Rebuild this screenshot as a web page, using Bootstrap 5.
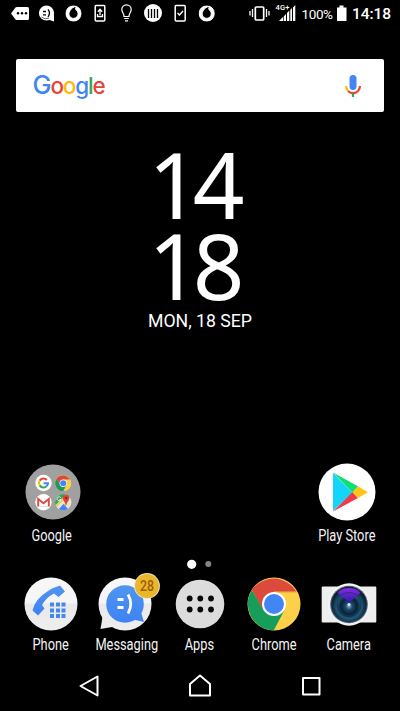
<!DOCTYPE html>
<html lang="en">
<head>
<meta charset="utf-8">
<meta name="viewport" content="width=device-width, initial-scale=1">
<title>Home screen</title>
<link href="https://cdn.jsdelivr.net/npm/bootstrap@5.3.0/dist/css/bootstrap.min.css" rel="stylesheet">
<style>
body{background:#000;color:#fff;font-family:Roboto,sans-serif}
svg{display:block}
.phone{width:400px;height:711px;overflow:hidden}
.status{height:28px}
.search{margin:31px 16px 0;height:53px;border-radius:2px;padding:0 21px 0 16.500px}
.wordmark{font:500 22.5px/53px Inter,sans-serif;letter-spacing:-1.200px}
.wordmark span:first-child{font-size:25.500px;line-height:1}
.clock{height:222px;padding-top:32px}
.digits{font:400 90.500px/81px "Noto Sans","Open Sans",sans-serif;letter-spacing:-7.200px;padding-right:14.500px}
.date{font-size:17.7px;line-height:20px;margin-top:5px}
.tile{width:74.5px}
.caption{font-size:16px;line-height:18px;margin-top:5px;white-space:nowrap;transform:scaleX(.8);color:#f4f4f4}
.shelf{margin-top:129px;height:85px;padding:0 16px}
.shelf .caption{margin-top:6px}
.pages{height:28px}
.dock{height:82px;padding:1px 13.5px 0}
.navkeys{height:47px}
</style>
</head>
<body>
<svg width="0" height="0" class="position-absolute">
<defs>
<linearGradient id="pale" x2="0" y2="1"><stop stop-color="#f7f7f7"/><stop offset=".48" stop-color="#f5f5f5"/><stop offset=".5" stop-color="#e9e9e9"/><stop offset="1" stop-color="#eee"/></linearGradient>
<linearGradient id="blue" x2="0" y2="1"><stop stop-color="#5096ee"/><stop offset="1" stop-color="#3e82f4"/></linearGradient>
<linearGradient id="violet" x2="0" y2="1"><stop stop-color="#862be8"/><stop offset="1" stop-color="#2b1aa0"/></linearGradient>
<radialGradient id="lens" cy=".55"><stop stop-color="#7fa9c4"/><stop offset=".2" stop-color="#1a4a6c"/><stop offset=".45" stop-color="#0a2138"/><stop offset=".7" stop-color="#1f5878"/><stop offset="1" stop-color="#0b1c30"/></radialGradient>
<symbol id="chrome" viewBox="0 0 54 54">
<circle cx="27" cy="27" r="26.5" fill="#fdd04a"/>
<path d="M4.800 13A26.500 26.500 0 0 1 49.500 14.800H27L16 33Z" fill="#dc4a3e"/>
<path d="M4.800 13L16.400 33 27 39 37.500 33 26.700 53.500A26.500 26.500 0 0 1 4.800 13Z" fill="#179d5b"/>
<path d="M27 15H49.600" stroke="#e2a52d" stroke-width="1"/>
<circle cx="27" cy="27" r="12" fill="#fff"/><circle cx="27" cy="27" r="10" fill="#4285f4"/>
</symbol>
<symbol id="drop" viewBox="0 0 16 16"><circle cx="8" cy="8" r="7.700" fill="#fff"/><path d="M11 .8C8.500 1 5.500 2.800 4.500 5.300A4.600 4.600 0 1 0 11 4.800C9.700 4.200 9.600 2.500 11 .8Z" fill="#000"/></symbol>
</defs>
</svg>
<main class="phone d-flex flex-column">
<header class="status">
<svg width="400" height="28" fill="none" stroke="#fff">
<path d="M11 13.500L15.500 7.500Q16 7 17 7H27.500Q29 7 29 8.500V18.500Q29 20 27.500 20H17Q16 20 15.500 19.500Z" fill="#fff" stroke="none"/>
<g fill="#000" stroke="none"><circle cx="18" cy="13.300" r="1.200"/><circle cx="22" cy="13.300" r="1.200"/><circle cx="26" cy="13.300" r="1.200"/></g>
<circle cx="46.500" cy="13" r="7.600" fill="#fff" stroke="none"/><path d="M48 19.500L54 21.500V14Z" fill="#fff" stroke="none"/>
<path d="M43 11.500h3M43 14.800h3M48 9.300Q51 13 48 16.800" stroke="#000" stroke-width="1.300"/><path d="M41.500 17Q45 20 49 18" stroke="#000" stroke-width=".6"/>
<use href="#drop" x="65.500" y="5.500" width="16" height="16"/><use href="#drop" x="198.700" y="5.500" width="16" height="16"/>
<rect x="95.200" y="5.500" width="9.600" height="15.500" rx="1" stroke-width="1.500"/><path d="M100 15V9.500M97.800 11.700L100 9.300l2.200 2.400M97.500 14v2.500h5V14" stroke-width="1.300"/>
<path d="M124 16.500C124 13 121.800 12.500 121.800 9.500A4.700 4.700 0 0 1 131.200 9.500C131.200 12.500 129 13 129 16.500ZM124.200 18.500h4.600M125 20.800h3" stroke-width="1.200"/>
<circle cx="153" cy="13" r="9" fill="#fff" stroke="none"/><path d="M148.500 9v9M151.500 9v9M154.500 9v9M157.500 9v9" stroke="#000" stroke-width="1.300"/>
<rect x="175.200" y="5.500" width="10" height="15.500" rx="1" stroke-width="1.500"/><path d="M177.500 13l2 2 3.500-4" stroke-width="1.400"/>
<rect x="255.300" y="7" width="8.400" height="13" rx="1" stroke-width="1.700"/><path d="M252.500 9v8M266.500 9v8M250 11v4.500M269 11v4.500" stroke-width="1.300"/>
<g fill="#fff" stroke="none" font-family="Roboto,sans-serif"><text x="275.500" y="9.800" font-size="7.500" font-weight="500" textLength="14">4G+</text>
<path d="M279 21L283 17V21ZM283.700 16.500L286 14V21H283.700ZM287 13L289.300 10.500V21H287ZM290.300 9.700L292 8V21H290.300ZM293 7.500L295.300 5V21H293Z"/>
<text x="301.500" y="18.700" font-size="13.500" textLength="31.500">100%</text>
<path d="M337 7.500h2.500V5.500h4v2h3V21H337Z"/>
<text x="352" y="19" font-size="15.500" font-weight="500" textLength="39">14:18</text></g>
</svg>
</header>
<section class="search bg-white d-flex justify-content-between align-items-center">
<div class="wordmark"><span style="color:#4285f4">G</span><span style="color:#ea4335">o</span><span style="color:#fbbc05">o</span><span style="color:#4285f4">g</span><span style="color:#34a853">l</span><span style="color:#ea4335">e</span></div>
<svg width="20" height="24" fill="none" stroke-width="2.200"><rect x="6.500" y="1" width="7" height="15" rx="3.500" fill="#4285f4"/><path d="M3 12Q3.200 15 5 17" stroke="#fbbc05"/><path d="M5 17Q10 21.500 15 17 16.900 15 17 12" stroke="#ea4335"/><path d="M10 19.500V23" stroke="#34a853"/></svg>
</section>
<section class="clock text-center">
<div class="digits">14<br>18</div>
<div class="date">MON, 18 SEP</div>
</section>
<section class="shelf d-flex justify-content-between">
<div class="tile d-flex flex-column align-items-center">
<svg width="56" height="58"><circle cx="28" cy="29" r="27.500" fill="#a0a0a0"/>
<circle cx="18.500" cy="20" r="8.200" fill="#fff"/>
<g fill="none" stroke-width="2"><path d="M14.700 17.600A4.500 4.500 0 0 1 21.800 17" stroke="#ea4335"/><path d="M14.700 17.600A4.500 4.500 0 0 0 14.700 22.400" stroke="#fbbc05"/><path d="M14.700 22.400A4.500 4.500 0 0 0 21.500 23.300" stroke="#34a853"/><path d="M21.500 23.300Q23 22 23 20.200H18.600" stroke="#4285f4"/></g>
<use href="#chrome" x="30" y="12" width="16.500" height="16.500"/>
<circle cx="18.500" cy="39.200" r="8.200" fill="#fff"/><path d="M13.200 43.500V36L18.500 40.200 23.800 36V43.500" fill="none" stroke="#d84a42" stroke-width="1.900"/><path d="M14.500 43.500h8" stroke="#ddd"/>
<clipPath id="round"><circle cx="38.200" cy="39.200" r="8.200"/></clipPath><g clip-path="url(#round)"><path d="M29 30h19v19H29Z" fill="#e6e3dc"/><path d="M29 30H44L29 46Z" fill="#31a565"/><path d="M30 44L41 33M34 48L42 40" stroke="#fccc3f" stroke-width="2.200"/><path d="M32 48L38.500 41 45 48Z" fill="#4285f4"/></g>
<path d="M41 43C40.500 39 37.800 38 37.800 35A3.300 3.300 0 0 1 44.400 35C44.400 38 41.500 39 41 43Z" fill="#df4537"/><circle cx="41.100" cy="35" r="1.200" fill="#84271f"/>
<path d="M35.800 34.800A2 2 0 1 0 36 36.500H34.500" fill="none" stroke="#fff" stroke-width=".8"/></svg>
<div class="caption pe-1">Google</div>
</div>
<div class="tile d-flex flex-column align-items-center">
<svg width="58" height="58"><circle cx="29" cy="29" r="28.500" fill="#fff"/><path d="M15 10V48L34.500 29.500Z" fill="#14d4fb"/><path d="M15 9.500L40 23.200 34.500 29.500Z" fill="#10df76"/><path d="M15 48.500L40 35 34.500 29Z" fill="#ed3b4b"/><path d="M40 23.200L50 29.200 40 35 34.500 29.200Z" fill="#ffc519"/></svg>
<div class="caption">Play Store</div>
</div>
</section>
<div class="pages d-flex justify-content-center">
<svg width="36" height="28"><circle cx="9.700" cy="16.300" r="4.600" fill="#fff"/><circle cx="26.300" cy="16" r="3" fill="#858585"/></svg>
</div>
<nav class="dock d-flex">
<div class="tile d-flex flex-column align-items-center">
<svg width="54" height="54"><circle cx="27" cy="27" r="26.500" fill="url(#pale)"/><path d="M24 14L28 11.500 36 8.500 41 14.500 34.500 20 30 16.500Q22 20.500 18 28L20.500 31.500 14 38.500 8.500 33.500Q11 22 24 14Z" fill="url(#blue)"/><path d="M26 25.500h4v4h-4zM32 25.500h4v4h-4zM37.500 25.500h4v4h-4zM26 31.500h4v4h-4zM32 31.500h4v4h-4zM37.500 31.500h4v4h-4zM26 37h4v4h-4zM32 37h4v4h-4zM37.500 37h4v4h-4z" fill="#4488f2"/></svg>
<div class="caption">Phone</div>
</div>
<div class="tile d-flex flex-column align-items-center">
<svg width="64" height="54" overflow="visible"><circle cx="32" cy="27" r="26.500" fill="url(#pale)"/><path d="M10 37L7.500 52 25 49Z" fill="#ececec"/><circle cx="32" cy="27" r="18.800" fill="url(#blue)"/><path d="M48 35L51 45 38 42Z" fill="#4386f3"/><path d="M24.500 22.500h6M24.500 30.500h6" stroke="#fff" stroke-width="2.800"/><path d="M35 17.500Q40.500 27 35 36.500" stroke="#fff" stroke-width="2.700" fill="none"/><circle cx="54" cy="9" r="12.900" fill="#f3e6bd"/><circle cx="54" cy="9" r="12" fill="#e9b72d"/><text x="54" y="14" text-anchor="middle" font-family="Roboto,sans-serif" font-size="14" font-weight="500" fill="#a35b08" textLength="14" lengthAdjust="spacingAndGlyphs">28</text></svg>
<div class="caption ps-1">Messaging</div>
</div>
<div class="tile d-flex flex-column align-items-center">
<svg width="54" height="54"><circle cx="27" cy="27" r="24.300" fill="#dcdcdc"/><g fill="#080808"><circle cx="16.700" cy="21.500" r="2.900"/><circle cx="27.300" cy="21.500" r="2.900"/><circle cx="38" cy="21.500" r="2.900"/><circle cx="16.700" cy="32.500" r="2.900"/><circle cx="27.300" cy="32.500" r="2.900"/><circle cx="38" cy="32.500" r="2.900"/></g></svg>
<div class="caption">Apps</div>
</div>
<div class="tile d-flex flex-column align-items-center">
<svg width="54" height="54"><use href="#chrome" width="54" height="54"/></svg>
<div class="caption">Chrome</div>
</div>
<div class="tile d-flex flex-column align-items-center">
<svg width="56" height="54"><rect x=".7" y="9.500" width="54.600" height="36" rx="1" fill="#eee"/><circle cx="28" cy="27.500" r="21.200" fill="#f2f2f2"/><circle cx="28" cy="27.500" r="18.800" fill="#4b6170"/><circle cx="28" cy="27.500" r="17.700" fill="url(#lens)"/><path d="M16.500 15.500A17 17 0 0 1 39.500 15.500L28 26Z" fill="url(#violet)"/><circle cx="28" cy="27.500" r="12" fill="none" stroke="#102a44" stroke-opacity=".6"/><circle cx="28" cy="27.500" r="1.500" fill="#d8e9f2"/></svg>
<div class="caption">Camera</div>
</div>
</nav>
<footer class="navkeys mt-auto">
<svg width="400" height="47" fill="none" stroke="#fff" stroke-width="2" stroke-linejoin="round"><path d="M80.500 22L97.500 12.500V31.500Z"/><path d="M190 20L200 11.500 210 20V31.500H190Z"/><rect x="303" y="14" width="16.500" height="16.500"/></svg>
</footer>
</main>
<script src="https://cdn.jsdelivr.net/npm/bootstrap@5.3.0/dist/js/bootstrap.bundle.min.js"></script>
</body>
</html>
